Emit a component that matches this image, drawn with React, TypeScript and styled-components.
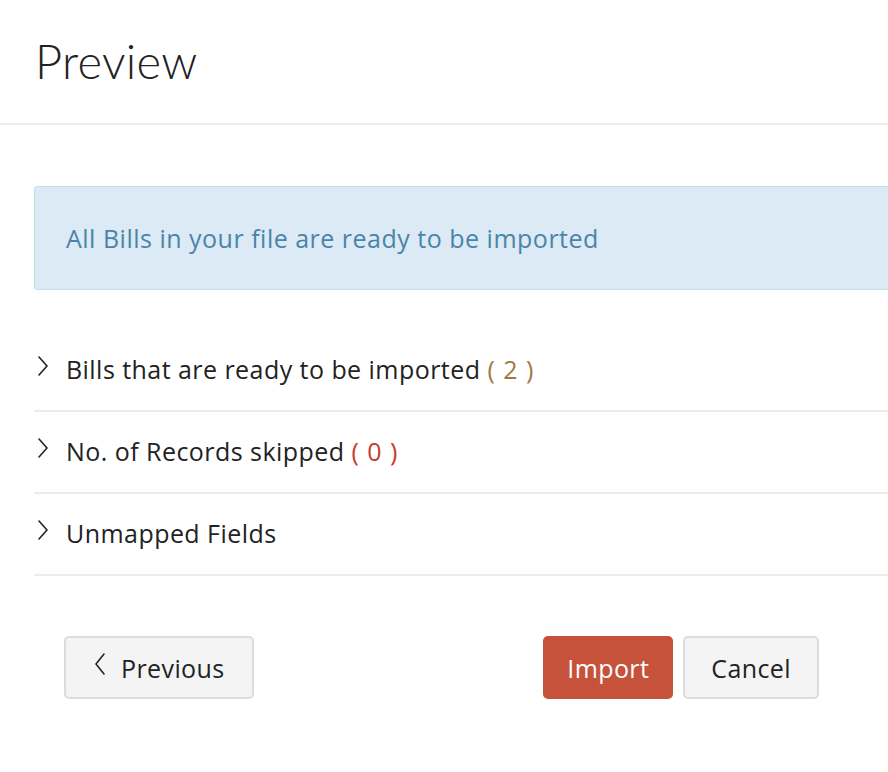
import React from 'react';
import styled, { createGlobalStyle } from 'styled-components';

const GlobalStyle = createGlobalStyle`
  html, body {
    margin: 0;
    padding: 0;
    background: #ffffff;
    font-family: "Open Sans", Lato, sans-serif;
    color: #222222;
  }
`;

const Page = styled.div`
  width: 888px;
  height: 772px;
  overflow: hidden;
  background: #fff;
`;

const Header = styled.header`
  height: 123px;
  display: flex;
  align-items: center;
  padding-left: 35px;
  border-bottom: 2px solid #ededed;
`;

const Title = styled.h1`
  margin: 0 0 2px;
  font-family: Lato, "Open Sans", sans-serif;
  font-size: 47px;
  font-weight: 300;
  color: #222;
  letter-spacing: 0.3px;
`;

const Body = styled.div`
  padding: 61px 0 0 34px;
`;

const Alert = styled.div`
  height: 102px;
  margin-right: -12px;
  display: flex;
  align-items: center;
  padding-left: 31px;
  background: #dbeaf4;
  border: 1px solid #bfe1ea;
  border-radius: 3px;
  font-size: 25px;
  letter-spacing: 0.5px;
  color: #4a85a9;
`;

const List = styled.div`
  margin-top: 40px;
`;

const Row = styled.div`
  height: 78px;
  padding-bottom: 2px;
  display: flex;
  align-items: center;
  border-bottom: 2px solid #ececec;
  font-size: 25px;
  letter-spacing: 0.45px;
  color: #222;
`;

const Chevron = styled.svg`
  width: 14px;
  height: 20px;
  margin: 0 16px 6px 2px;
`;

const Count = styled.span<{ $tone: 'gold' | 'red' }>`
  margin-left: 7px;
  color: ${(p) => (p.$tone === 'gold' ? '#9c7b42' : '#c83a2b')};
  word-spacing: 1px;
`;

const Actions = styled.div`
  display: flex;
  justify-content: space-between;
  margin-top: 60px;
  padding: 0 69px 0 64px;
`;

const Group = styled.div`
  display: flex;
  gap: 10px;
`;

const Button = styled.button<{ $primary?: boolean; $pad: number }>`
  height: 63px;
  padding: 0 ${(p) => p.$pad}px;
  display: flex;
  align-items: center;
  gap: 14px;
  font-family: "Open Sans", Lato, sans-serif;
  font-size: 25px;
  letter-spacing: 0.4px;
  border-radius: 5px;
  cursor: pointer;
  color: ${(p) => (p.$primary ? '#ffffff' : '#222')};
  background: ${(p) => (p.$primary ? '#c6523b' : '#f4f4f4')};
  border: 2px solid ${(p) => (p.$primary ? '#c6523b' : '#dcdcdc')};
`;

const Arrow = () => (
  <Chevron viewBox="0 0 14 20" fill="none">
    <path d="M3 1 L11 10 L3 19" stroke="#222" strokeWidth="1.6" strokeLinecap="round" strokeLinejoin="round" />
  </Chevron>
);

const PrevArrow = styled.svg`
  width: 14px;
  height: 22px;
  margin-bottom: 8px;
`;

export default function App() {
  return (
    <Page>
      <GlobalStyle />
      <Header>
        <Title>Preview</Title>
      </Header>
      <Body>
        <Alert>All Bills in your file are ready to be imported</Alert>
        <List>
          <Row>
            <Arrow />
            Bills that are ready to be imported
            <Count $tone="gold">( 2 )</Count>
          </Row>
          <Row>
            <Arrow />
            No. of Records skipped
            <Count $tone="red">( 0 )</Count>
          </Row>
          <Row>
            <Arrow />
            Unmapped Fields
          </Row>
        </List>
      </Body>
      <Actions>
        <Button $pad={27}>
          <PrevArrow viewBox="0 0 14 22" fill="none">
            <path d="M11 1 L3 11 L11 21" stroke="#222" strokeWidth="1.6" strokeLinecap="round" strokeLinejoin="round" />
          </PrevArrow>
          Previous
        </Button>
        <Group>
          <Button $primary $pad={22}>Import</Button>
          <Button $pad={26}>Cancel</Button>
        </Group>
      </Actions>
    </Page>
  );
}
